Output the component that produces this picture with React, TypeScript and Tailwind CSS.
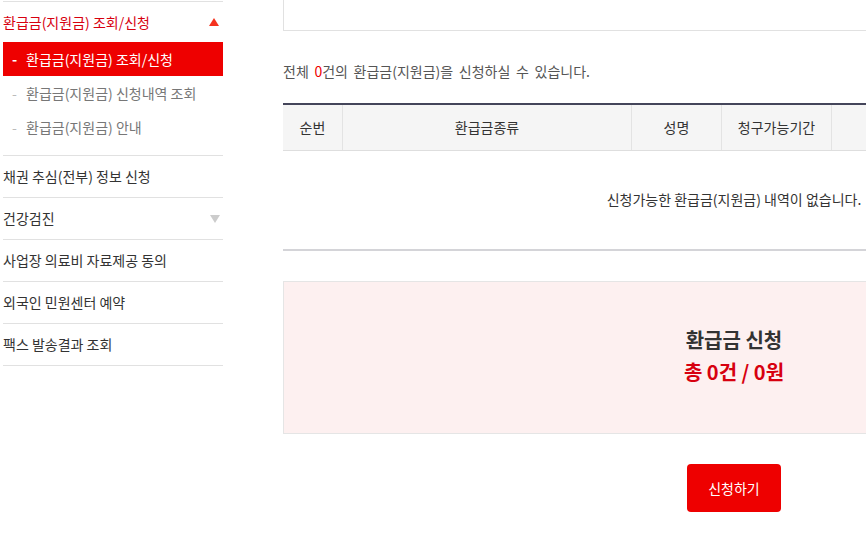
import { ReactNode } from 'react';

const font = { fontFamily: '"Noto Sans CJK KR", "Noto Sans", sans-serif' };

function Caret({ up, className }: { up?: boolean; className: string }) {
  return (
    <svg width="10" height="8" viewBox="0 0 10 8" className={className}>
      {up ? <path d="M5 0 L10 8 L0 8 Z" fill="currentColor" /> : <path d="M0 0 L10 0 L5 8 Z" fill="currentColor" />}
    </svg>
  );
}

function MenuRow({ children, right }: { children: ReactNode; right?: ReactNode }) {
  return (
    <li className="flex h-[42px] items-center justify-between border-b border-[#e1e1e1] text-[14px] text-[#333]">
      <span>{children}</span>
      {right}
    </li>
  );
}

function Sidebar() {
  return (
    <aside className="w-[220px] shrink-0 pt-px">
      <div className="border-t border-[#e1e1e1]">
        <div className="flex h-[40px] items-center justify-between text-[14px] text-[#d7000f]">
          <span>환급금(지원금) 조회/신청</span>
          <Caret up className="mr-[4px] text-[#f5331f]" />
        </div>
        <ul className="pb-[11px]">
          <li className="flex h-[34px] items-center bg-[#ee0000] pl-[9px] text-[14px] text-white">
            <span className="w-[14px] font-bold">-</span>
            <span>환급금(지원금) 조회/신청</span>
          </li>
          {['환급금(지원금) 신청내역 조회', '환급금(지원금) 안내'].map((t) => (
            <li key={t} className="flex h-[34px] items-center pl-[9px] text-[14px] text-[#777]">
              <span className="w-[14px] text-[#bbb]">-</span>
              <span>{t}</span>
            </li>
          ))}
        </ul>
      </div>
      <ul className="border-t border-[#e1e1e1]">
        <MenuRow>채권 추심(전부) 정보 신청</MenuRow>
        <MenuRow right={<Caret className="mr-[3px] text-[#ccc]" />}>건강검진</MenuRow>
        <MenuRow>사업장 의료비 자료제공 동의</MenuRow>
        <MenuRow>외국인 민원센터 예약</MenuRow>
        <MenuRow>팩스 발송결과 조회</MenuRow>
      </ul>
    </aside>
  );
}

const cols = [
  { label: '순번', w: 'w-[60px]' },
  { label: '환급금종류', w: 'w-[289px]' },
  { label: '성명', w: 'w-[90px]' },
  { label: '청구가능기간', w: 'w-[110px]' },
  { label: '', w: 'flex-1' },
];

function Main() {
  return (
    <main className="w-[902px] shrink-0">
      <div className="h-[31px] border-x border-b border-[#e1e1e1]" />
      <p className="mt-[30px] text-[14px] text-[#555] [word-spacing:2.5px]">
        전체 <span className="text-[#ee0000]">0</span>건의 환급금(지원금)을 신청하실 수 있습니다.
      </p>
      <div className="mt-[21px] border-t-2 border-[#44455a]">
        <div className="flex h-[46px] border-b border-[#dedede] bg-[#f5f5f5] text-[14px] text-[#333]">
          {cols.map((c, i) => (
            <div key={i} className={`${c.w} flex items-center justify-center ${i < cols.length - 1 ? 'border-r border-[#e3e3e3]' : ''}`}>
              {c.label}
            </div>
          ))}
        </div>
        <div className="flex h-[100px] items-center justify-center border-b-2 border-[#d4d4d8] pb-[2px] text-[14px] text-[#333]">
          신청가능한 환급금(지원금) 내역이 없습니다.
        </div>
      </div>
      <div className="mt-[30px] flex h-[153px] flex-col items-center justify-center border border-[#e5e5e5] bg-[#fdf0f0] pb-[4px] font-bold leading-[32px]">
        <div className="text-[20px] text-[#333]">환급금 신청</div>
        <div className="text-[20px] text-[#d7000f]">총 0건 / 0원</div>
      </div>
      <div className="mt-[30px] flex justify-center">
        <button className="h-[48px] w-[94px] rounded-[4px] bg-[#ee0000] text-[14px] text-white">신청하기</button>
      </div>
    </main>
  );
}

export default function App() {
  return (
    <div className="h-[535px] w-[866px] overflow-hidden bg-white" style={font}>
      <div className="flex gap-[60px] pl-[3px]">
        <Sidebar />
        <Main />
      </div>
    </div>
  );
}
